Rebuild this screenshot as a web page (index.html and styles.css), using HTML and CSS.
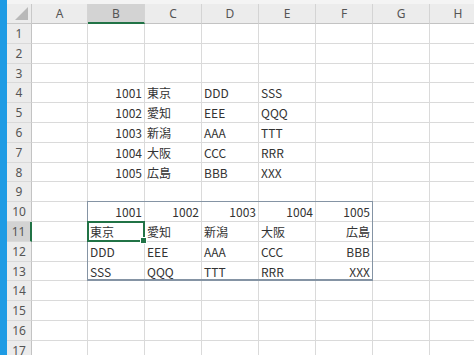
FILE: index.html
```html
<!DOCTYPE html>
<html lang="ja">
<head>
    <meta charset="UTF-8">
    <meta name="viewport" content="width=device-width, initial-scale=1.0">
    <title>Book1 - Excel</title>
    <link rel="stylesheet" href="styles.css">
</head>
<body>
    <div class="app">
        <div class="strip"></div>
        <div class="main">
            <div class="topbar"></div>
            <div class="sheet">
                <!-- Cabecera de columnas -->
                <div class="corner"><span class="tri"></span></div>
                <div class="ch">A</div>
                <div class="ch sel">B</div>
                <div class="ch">C</div>
                <div class="ch">D</div>
                <div class="ch">E</div>
                <div class="ch">F</div>
                <div class="ch">G</div>
                <div class="ch">H</div>

                <!-- 1 -->
                <div class="rh">1</div><div class="c"></div><div class="c"></div><div class="c"></div><div class="c"></div><div class="c"></div><div class="c"></div><div class="c"></div><div class="c"></div>
                <!-- 2 -->
                <div class="rh">2</div><div class="c"></div><div class="c"></div><div class="c"></div><div class="c"></div><div class="c"></div><div class="c"></div><div class="c"></div><div class="c"></div>
                <!-- 3 -->
                <div class="rh">3</div><div class="c"></div><div class="c"></div><div class="c"></div><div class="c"></div><div class="c"></div><div class="c"></div><div class="c"></div><div class="c"></div>
                <!-- 4 -->
                <div class="rh">4</div><div class="c"></div><div class="c num">1001</div><div class="c">東京</div><div class="c">DDD</div><div class="c">SSS</div><div class="c"></div><div class="c"></div><div class="c"></div>
                <!-- 5 -->
                <div class="rh">5</div><div class="c"></div><div class="c num">1002</div><div class="c">愛知</div><div class="c">EEE</div><div class="c">QQQ</div><div class="c"></div><div class="c"></div><div class="c"></div>
                <!-- 6 -->
                <div class="rh">6</div><div class="c"></div><div class="c num">1003</div><div class="c">新潟</div><div class="c">AAA</div><div class="c">TTT</div><div class="c"></div><div class="c"></div><div class="c"></div>
                <!-- 7 -->
                <div class="rh">7</div><div class="c"></div><div class="c num">1004</div><div class="c">大阪</div><div class="c">CCC</div><div class="c">RRR</div><div class="c"></div><div class="c"></div><div class="c"></div>
                <!-- 8 -->
                <div class="rh">8</div><div class="c"></div><div class="c num">1005</div><div class="c">広島</div><div class="c">BBB</div><div class="c">XXX</div><div class="c"></div><div class="c"></div><div class="c"></div>
                <!-- 9 -->
                <div class="rh">9</div><div class="c"></div><div class="c"></div><div class="c"></div><div class="c"></div><div class="c"></div><div class="c"></div><div class="c"></div><div class="c"></div>
                <!-- 10 -->
                <div class="rh">10</div><div class="c"></div><div class="c num">1001</div><div class="c num">1002</div><div class="c num">1003</div><div class="c num">1004</div><div class="c num">1005</div><div class="c"></div><div class="c"></div>
                <!-- 11 -->
                <div class="rh sel">11</div><div class="c"></div><div class="c">東京</div><div class="c">愛知</div><div class="c">新潟</div><div class="c">大阪</div><div class="c num">広島</div><div class="c"></div><div class="c"></div>
                <!-- 12 -->
                <div class="rh">12</div><div class="c"></div><div class="c">DDD</div><div class="c">EEE</div><div class="c">AAA</div><div class="c">CCC</div><div class="c num">BBB</div><div class="c"></div><div class="c"></div>
                <!-- 13 -->
                <div class="rh">13</div><div class="c"></div><div class="c">SSS</div><div class="c">QQQ</div><div class="c">TTT</div><div class="c">RRR</div><div class="c num">XXX</div><div class="c"></div><div class="c"></div>
                <!-- 14 -->
                <div class="rh">14</div><div class="c"></div><div class="c"></div><div class="c"></div><div class="c"></div><div class="c"></div><div class="c"></div><div class="c"></div><div class="c"></div>
                <!-- 15 -->
                <div class="rh">15</div><div class="c"></div><div class="c"></div><div class="c"></div><div class="c"></div><div class="c"></div><div class="c"></div><div class="c"></div><div class="c"></div>
                <!-- 16 -->
                <div class="rh">16</div><div class="c"></div><div class="c"></div><div class="c"></div><div class="c"></div><div class="c"></div><div class="c"></div><div class="c"></div><div class="c"></div>
                <!-- 17 -->
                <div class="rh">17</div><div class="c"></div><div class="c"></div><div class="c"></div><div class="c"></div><div class="c"></div><div class="c"></div><div class="c"></div><div class="c"></div>

                <!-- Rango B10:F13 y celda activa B11 -->
                <div class="range"></div>
                <div class="active"><span class="handle"></span></div>
            </div>
        </div>
    </div>
</body>
</html>
```

FILE: styles.css
```css
body {
    margin: 0;
    overflow: hidden;
    background: #fff;
    font-family: "Noto Sans CJK JP", "Noto Sans", sans-serif;
}
.app {
    display: flex;
    height: 100vh;
}
.strip {
    width: 7px;
    flex: none;
    background: #1e9be4;
}
.main {
    flex: 1;
    overflow: hidden;
}
.topbar {
    height: 4px;
    background: #f4f4f4;
}
.sheet {
    position: relative;
    display: grid;
    grid-template-columns: 25px 56px repeat(7, 57px);
    grid-template-rows: 20px;
    grid-auto-rows: 19.8px;
    width: 480px;
    font-size: 12px;
    color: #333;
}
.corner {
    position: relative;
    background: #ececec;
    border-right: 1px solid #c9c9c9;
    border-bottom: 1px solid #c9c9c9;
}
.tri {
    position: absolute;
    right: 3px;
    bottom: 3px;
    width: 0;
    height: 0;
    border-left: 13px solid transparent;
    border-bottom: 13px solid #b9b9b9;
}
.ch {
    background: #ececec;
    border-right: 1px solid #d4d4d4;
    border-bottom: 1px solid #c3c3c3;
    color: #555;
    text-align: center;
    line-height: 19px;
    font-family: "Noto Sans", sans-serif;
}
.ch.sel {
    background: #d3d3d3;
    border-bottom: 2px solid #217346;
}
.rh {
    background: #ececec;
    border-right: 1px solid #c3c3c3;
    border-bottom: 1px solid #d9d9d9;
    color: #555;
    text-align: center;
    line-height: 19px;
    font-family: "Noto Sans", sans-serif;
    box-sizing: border-box;
}
.rh.sel {
    background: #d3d3d3;
    border-right: 2px solid #217346;
}
.c {
    border-right: 1px solid #dadada;
    border-bottom: 1px solid #dadada;
    padding: 0 2px;
    line-height: 19px;
    white-space: nowrap;
    overflow: hidden;
    box-sizing: border-box;
}
.num {
    text-align: right;
}
.range {
    position: absolute;
    inset: -1px 0 0 -1px;
    grid-row: 11 / 15;
    grid-column: 3 / 8;
    border: 1px solid #8594a4;
    border-bottom-width: 2px;
    pointer-events: none;
}
.active {
    position: absolute;
    inset: -1px 0 0 -1px;
    grid-row: 12 / 13;
    grid-column: 3 / 4;
    border: 2px solid #217346;
    pointer-events: none;
}
.handle {
    position: absolute;
    right: -4px;
    bottom: -4px;
    width: 5px;
    height: 5px;
    background: #217346;
    border: 1px solid #fff;
}
```
